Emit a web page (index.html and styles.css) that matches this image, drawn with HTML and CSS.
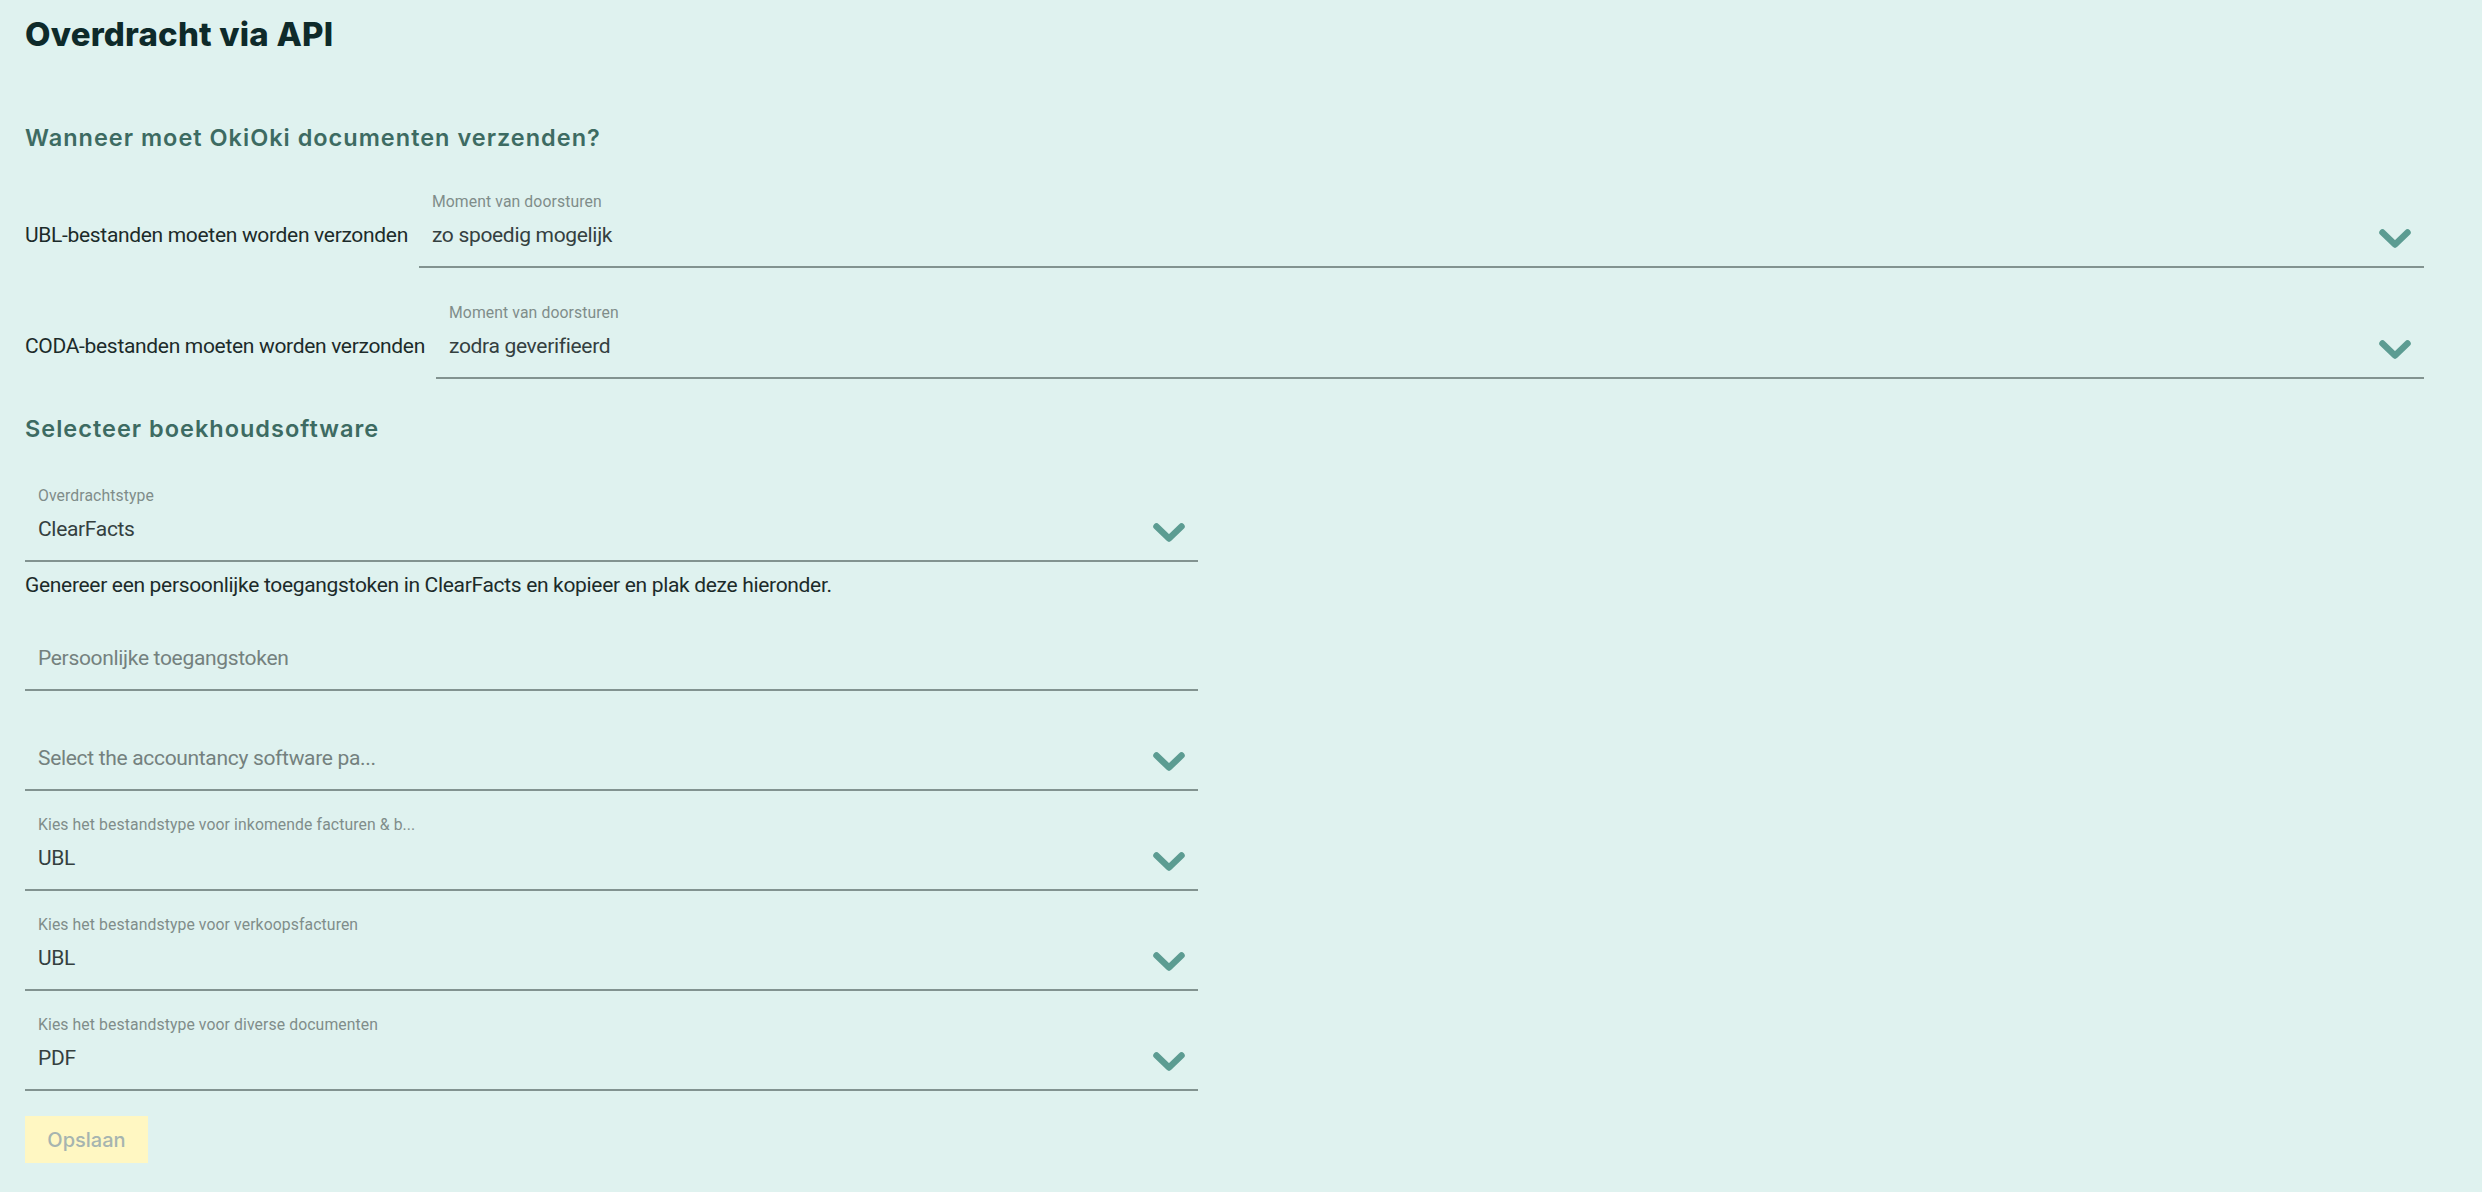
FILE: index.html
```html
<!DOCTYPE html>
<html>
<head>
    <title>Overdracht via API</title>
    <link rel="stylesheet" href="styles.css">
</head>
<body>
    <div class="page">
        <h1>Overdracht via API</h1>

        <h2 class="section-title first">Wanneer moet OkiOki documenten verzenden?</h2>

        <div class="send-row">
            <div class="row-label">UBL-bestanden moeten worden verzonden</div>
            <div class="field">
                <div class="field-label">Moment van doorsturen</div>
                <div class="field-value">
                    <span>zo spoedig mogelijk</span>
                    <svg class="chevron" viewBox="0 0 32 19"><path d="M3.5 3.5 L16 15.5 L28.5 3.5"/></svg>
                </div>
            </div>
        </div>

        <div class="send-row second">
            <div class="row-label">CODA-bestanden moeten worden verzonden</div>
            <div class="field">
                <div class="field-label">Moment van doorsturen</div>
                <div class="field-value">
                    <span>zodra geverifieerd</span>
                    <svg class="chevron" viewBox="0 0 32 19"><path d="M3.5 3.5 L16 15.5 L28.5 3.5"/></svg>
                </div>
            </div>
        </div>

        <h2 class="section-title">Selecteer boekhoudsoftware</h2>

        <div class="software">
            <div class="field">
                <div class="field-label">Overdrachtstype</div>
                <div class="field-value">
                    <span>ClearFacts</span>
                    <svg class="chevron" viewBox="0 0 32 19"><path d="M3.5 3.5 L16 15.5 L28.5 3.5"/></svg>
                </div>
            </div>

            <p class="help">Genereer een persoonlijke toegangstoken in ClearFacts en kopieer en plak deze hieronder.</p>

            <div class="field token">
                <div class="field-label"></div>
                <div class="field-value placeholder">
                    <span>Persoonlijke toegangstoken</span>
                </div>
            </div>

            <div class="field">
                <div class="field-label"></div>
                <div class="field-value placeholder">
                    <span>Select the accountancy software pa...</span>
                    <svg class="chevron" viewBox="0 0 32 19"><path d="M3.5 3.5 L16 15.5 L28.5 3.5"/></svg>
                </div>
            </div>

            <div class="field">
                <div class="field-label">Kies het bestandstype voor inkomende facturen &amp; b...</div>
                <div class="field-value">
                    <span>UBL</span>
                    <svg class="chevron" viewBox="0 0 32 19"><path d="M3.5 3.5 L16 15.5 L28.5 3.5"/></svg>
                </div>
            </div>

            <div class="field">
                <div class="field-label">Kies het bestandstype voor verkoopsfacturen</div>
                <div class="field-value">
                    <span>UBL</span>
                    <svg class="chevron" viewBox="0 0 32 19"><path d="M3.5 3.5 L16 15.5 L28.5 3.5"/></svg>
                </div>
            </div>

            <div class="field">
                <div class="field-label">Kies het bestandstype voor diverse documenten</div>
                <div class="field-value">
                    <span>PDF</span>
                    <svg class="chevron" viewBox="0 0 32 19"><path d="M3.5 3.5 L16 15.5 L28.5 3.5"/></svg>
                </div>
            </div>

            <button type="button" class="save" disabled>Opslaan</button>
        </div>
    </div>
</body>
</html>
```

FILE: styles.css
```css
body {
    margin: 0;
    background-color: #dff2ef;
    font-family: Roboto, "Liberation Sans", sans-serif;
    font-size: 21px;
    letter-spacing: -0.32px;
    color: #1c2b2a;
}

.page {
    padding: 14px 58px 0 25px;
}

h1 {
    margin: 0;
    font-family: Inter, "Liberation Sans", sans-serif;
    font-size: 33px;
    line-height: 40px;
    font-weight: 800;
    letter-spacing: 0.2px;
    color: #0e2a2a;
}

.section-title {
    margin: 35px 0 0;
    font-family: Inter, "Liberation Sans", sans-serif;
    font-size: 23.5px;
    line-height: 30px;
    font-weight: 600;
    letter-spacing: 1px;
    color: #3d6b62;
}

.section-title.first {
    margin-top: 69px;
}

/* rows with a label in front of the select */
.send-row {
    display: flex;
    align-items: flex-end;
    gap: 11px;
    margin-top: 39px;
}

.send-row.second {
    margin-top: 35px;
}

.row-label {
    line-height: 32px;
    padding-bottom: 17px;
    white-space: nowrap;
    color: #1c2b2a;
}

.send-row .field {
    flex: 1;
    margin-top: 0;
}

/* underlined select field */
.field {
    margin-top: 24px;
    padding: 0 13px 15px;
    border-bottom: 2px solid #829390;
}

.field-label {
    height: 20px;
    font-size: 15.75px;
    line-height: 20px;
    letter-spacing: 0.1px;
    color: #7f8d8a;
    white-space: nowrap;
}

.field-value {
    display: flex;
    justify-content: space-between;
    align-items: center;
    margin-top: 7px;
    height: 32px;
    line-height: 32px;
    color: #34403f;
}

.field-value.placeholder {
    color: #74817e;
}

.chevron {
    width: 32px;
    height: 19px;
    margin-top: 7px;
    flex-shrink: 0;
}

.chevron path {
    fill: none;
    stroke: #5c9c92;
    stroke-width: 6.5;
    stroke-linecap: round;
    stroke-linejoin: round;
}

.software {
    width: 1173px;
}

.software .field:first-child {
    margin-top: 42px;
}

.help {
    margin: 9px 0 0;
    line-height: 28px;
    color: #1c2b2a;
}

.field.token {
    margin-top: 16px;
}

.save {
    display: block;
    margin-top: 25px;
    width: 123px;
    height: 47px;
    padding: 0;
    border: none;
    background-color: #fff7c2;
    font-family: Inter, "Liberation Sans", sans-serif;
    font-size: 20px;
    font-weight: 500;
    color: #a6b4b0;
}
```
